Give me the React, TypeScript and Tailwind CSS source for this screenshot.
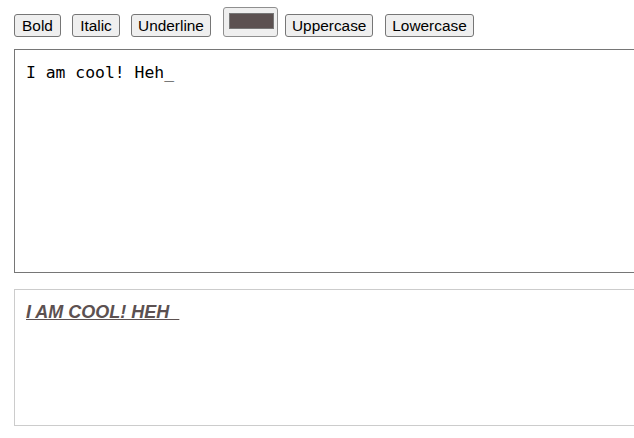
import { useState } from "react";

const swatch = "#5c5151";

function ToolButton({ label, className = "" }: { label: string; className?: string }) {
  return (
    <button
      className={`h-[23px] rounded-[3px] border border-[#767676] bg-[#efefef] px-[6px] text-[15.4px] leading-[19px] text-black ${className}`}
    >
      {label}
    </button>
  );
}

export default function App() {
  const [text] = useState("I am cool! Heh_");

  return (
    <div className="h-[438px] w-full overflow-hidden bg-white font-['Liberation_Sans',Arial,sans-serif]">
      <div className="flex items-end pl-[14px] pt-[7px]">
        <ToolButton label="Bold" className="mr-[11px] w-[47px]" />
        <ToolButton label="Italic" className="mr-[11px] w-[48px]" />
        <ToolButton label="Underline" className="mr-[12px] w-[80px]" />
        <div className="mr-[7px] flex h-[30px] w-[55px] items-start rounded-[3px] border border-[#8f8f8f] bg-[#efefef] pl-[5px] pt-[5px]">
          <div className="h-[16px] w-[45px] border border-[#777]" style={{ backgroundColor: swatch }} />
        </div>
        <ToolButton label="Uppercase" className="mr-[12px] w-[88px]" />
        <ToolButton label="Lowercase" className="w-[89px]" />
      </div>

      <div className="ml-[14px] mt-[12px] h-[224px] w-[640px] border border-[#767676] px-[11px] pt-[13px] font-['DejaVu_Sans_Mono','Liberation_Mono',monospace] text-[16.4px] leading-[20px] text-black">
        {text}
      </div>

      <div className="ml-[14px] mt-[16px] h-[137px] w-[640px] border border-[#cccccc] px-[11px] pt-[11px]">
        <span
          className="text-[18px] font-bold italic uppercase underline leading-[22px]"
          style={{ color: swatch }}
        >
          {text}
        </span>
      </div>
    </div>
  );
}
